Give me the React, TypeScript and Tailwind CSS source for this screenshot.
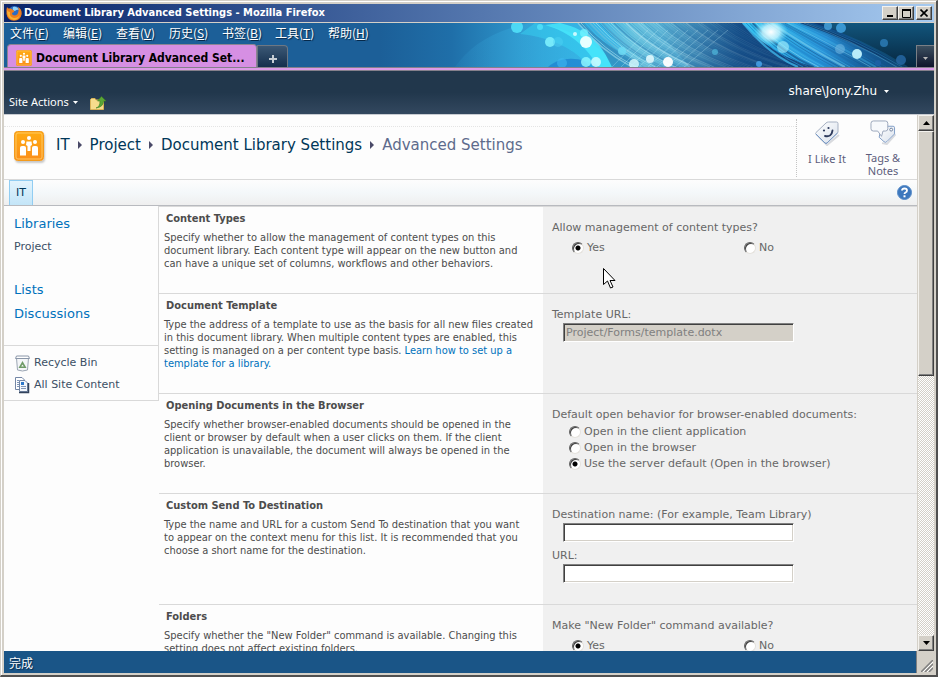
import type { ReactNode } from "react";

const MENUS = [
  ["文件", "F"],
  ["编辑", "E"],
  ["查看", "V"],
  ["历史", "S"],
  ["书签", "B"],
  ["工具", "T"],
  ["帮助", "H"],
];

const VERDANA = "font-['DejaVu_Sans',Verdana,sans-serif]";
const TAHOMA = "font-['DejaVu_Sans_Condensed',Tahoma,sans-serif]";
const CJK = "font-['Noto_Sans_CJK_SC',sans-serif]";
const RAISED =
  "border border-t-[#f4f2ee] border-l-[#f4f2ee] border-r-[#404040] border-b-[#404040] bg-[#d4d0c8] shadow-[inset_-1px_-1px_0_#808080]";

function range(n: number) {
  return Array.from({ length: n }, (_, i) => i);
}

function Banner() {
  const blues = ["#8fd0e6", "#3a86b8", "#6fbcd9", "#b4e2f0", "#4a98c4"];
  const deep = ["#3fb4e8", "#14558f", "#1f86cc", "#7fd4f0", "#1a68a8"];
  return (
    <svg className="absolute top-0 right-0" width="554" height="44" viewBox="380 23 554 44" aria-hidden="true">
      <defs>
        <linearGradient id="sky" x1="380" x2="934" y1="0" y2="0" gradientUnits="userSpaceOnUse">
          <stop offset="0" stopColor="#1c5f98" />
          <stop offset="0.13" stopColor="#1f6fa9" />
          <stop offset="0.26" stopColor="#2e97cc" />
          <stop offset="0.38" stopColor="#35b4e4" />
          <stop offset="0.46" stopColor="#66c4e0" />
          <stop offset="0.58" stopColor="#4a9cc8" />
          <stop offset="0.66" stopColor="#1a5f9c" />
          <stop offset="0.74" stopColor="#0c3a74" />
          <stop offset="0.9" stopColor="#0d3f70" />
          <stop offset="1" stopColor="#0f4d72" />
        </linearGradient>
        <linearGradient id="haze" x1="455" x2="600" y1="0" y2="0" gradientUnits="userSpaceOnUse">
          <stop offset="0" stopColor="#37a8dc" stopOpacity="0.1" />
          <stop offset="1" stopColor="#37b8e8" stopOpacity="0.7" />
        </linearGradient>
        <linearGradient id="beam" x1="740" x2="910" y1="23" y2="67" gradientUnits="userSpaceOnUse">
          <stop offset="0" stopColor="#35c8f2" />
          <stop offset="0.5" stopColor="#2b93d8" />
          <stop offset="1" stopColor="#12528f" stopOpacity="0.3" />
        </linearGradient>
        <linearGradient id="night" x1="0" x2="0" y1="23" y2="67" gradientUnits="userSpaceOnUse">
          <stop offset="0" stopColor="#12557c" />
          <stop offset="1" stopColor="#06263f" />
        </linearGradient>
        <linearGradient id="shade" x1="660" x2="740" y1="0" y2="0" gradientUnits="userSpaceOnUse">
          <stop offset="0" stopColor="#0c3a74" stopOpacity="0" />
          <stop offset="1" stopColor="#0c3a74" stopOpacity="0.6" />
        </linearGradient>
        <radialGradient id="glow">
          <stop offset="0" stopColor="#ffffff" />
          <stop offset="0.5" stopColor="#c9f7ff" stopOpacity="0.85" />
          <stop offset="1" stopColor="#6fe4fb" stopOpacity="0" />
        </radialGradient>
      </defs>
      <rect x="380" y="23" width="554" height="44" fill="url(#sky)" />
      <path d="M455 67 C470 45 495 30 530 23 H600 L640 67Z" fill="url(#haze)" />
      <path d="M548 67 C560 56 580 56 600 67Z" fill="#1d7fd0" opacity="0.7" />
      <path d="M535 23 C575 30 600 44 615 67 H590 C575 50 555 38 520 34Z" fill="#38dcf8" opacity="0.4" />
      <path d="M560 23 C590 30 603 46 612 67 H598 C588 48 570 32 545 25Z" fill="#4cf0ff" opacity="0.7" />
      <path d="M583 23 Q608 50 642 62 L632 67 H612 Q600 40 578 23Z" fill="#2f86b8" opacity="0.7" />
      {range(56).map((i) => (
        <path
          key={i}
          d={`M${578 + i * 3} 23 Q${600 + i * 3.3} 50 ${632 + i * 3.9} 67`}
          fill="none"
          stroke={blues[(i * 3) % 5]}
          strokeWidth={i % 4 === 0 ? 1.4 : 0.8}
          opacity={0.75 - i * 0.008}
        />
      ))}
      <path d="M650 23 H745 Q775 58 815 67 H690Z" fill="url(#shade)" />
      {range(9).map((i) => (
        <path key={i} d={`M${612 + i * 9} 67 L${648 + i * 10} 30`} stroke="#c8f4fc" strokeWidth="0.7" opacity="0.4" />
      ))}
      <path d="M880 23 H934 V67 H905 Q870 45 820 23Z" fill="url(#night)" />
      <path d="M742 23 Q775 58 815 67 H900 Q850 40 800 23Z" fill="url(#beam)" />
      {range(22).map((i) => (
        <path
          key={i}
          d={`M${743 + i * 3.2} 23 Q${768 + i * 4.3} ${54 - i * 0.8} ${798 + i * 5.2} 67`}
          fill="none"
          stroke={deep[(i * 2) % 5]}
          strokeWidth={i % 3 === 0 ? 2 : 1}
          opacity={0.8 - i * 0.025}
        />
      ))}
      <ellipse cx="771" cy="32" rx="17" ry="14" fill="url(#glow)" />
      <circle cx="783" cy="47" r="6" fill="#a8effc" opacity="0.6" />
      {[
        [517, 27, 6, "#52e4fb", 0.85],
        [540, 27, 3, "#52e4fb", 0.8],
        [550, 42, 5, "#7df0fd", 0.9],
        [558, 42, 5, "#4fd3f5", 0.45],
        [562, 63, 5, "#3fb8f0", 0.6],
        [575, 34, 2, "#d8fcff", 0.9],
        [584, 33, 4, "#6ff2ff", 0.8],
        [586, 42, 6, "#e6ffff", 1],
        [586, 62, 5, "#8df6ff", 0.85],
        [596, 62, 5, "#c8fcff", 0.9],
        [622, 51, 4, "#6fdcf5", 0.85],
        [634, 64, 5, "#d5f8fd", 0.85],
        [650, 59, 4, "#e8fcff", 0.85],
        [668, 62, 5, "#ffffff", 0.95],
        [715, 52, 3, "#4fb8dc", 0.7],
        [759, 64, 3, "#4aa8f0", 0.8],
        [828, 26, 4, "#4ba8e0", 0.8],
        [841, 28, 5, "#3f9edc", 0.9],
        [840, 49, 5, "#6fb4e0", 0.6],
        [857, 54, 5, "#b8ecfa", 1],
        [884, 43, 4, "#2a78b0", 0.9],
        [878, 63, 3, "#1f62a8", 0.8],
        [901, 60, 5, "#24649f", 0.9],
      ].map(([x, y, r, c, o], i) => (
        <circle key={i} cx={x} cy={y} r={r} fill={String(c)} opacity={o} />
      ))}
    </svg>
  );
}

function FirefoxIcon() {
  return (
    <svg width="16" height="16" viewBox="0 0 16 16" aria-hidden="true">
      <circle cx="8.5" cy="7.5" r="6.5" fill="#2b6cc4" />
      <path d="M7 2 Q11 1 13 5 Q11 4 9 6 Q6 6 7 2Z" fill="#8fd0f5" />
      <path d="M1 2 Q2 4 4 3.500 Q6 3.500 7 5 Q9 5.500 8 7 L6 8 Q6 10.500 9 10.500 Q12 10 12.500 6 Q13 4 12 2 Q16 4 15.700 9 Q14.500 15.500 8 15.700 Q1.500 15.500 0.500 9 Q0 5 1 2Z" fill="#ee7d1c" />
      <path d="M1 5 Q2 7 4 7 Q3 12 8 13 Q12 13 14 10 Q12 15 8 15 Q1 14 1 5Z" fill="#f9b233" />
    </svg>
  );
}

function PeopleIcon({ size }: { size: number }) {
  return (
    <svg width={size} height={size} viewBox="0 0 30 30" aria-hidden="true">
      <defs>
        <linearGradient id="amber" x1="0" x2="0" y1="0" y2="1">
          <stop offset="0" stopColor="#ffab12" />
          <stop offset="1" stopColor="#fb8f1c" />
        </linearGradient>
      </defs>
      <rect x="0.500" y="0.500" width="29" height="29" rx="3" fill="url(#amber)" stroke="#f39a1c" />
      <rect x="2" y="2" width="26" height="26" rx="2" fill="none" stroke="#ffc860" />
      <g fill="#fff">
        <circle cx="15" cy="7" r="2" />
        <circle cx="9" cy="11" r="2" />
        <circle cx="21" cy="11" r="2" />
        <path d="M12.500 10.500 H17.500 L18 14 L16.500 15 V20 H13.500 V15 L12 14Z" />
        <path d="M6 24.500 V16.500 Q6 15 8 15 H10 Q12 15 12 16.500 V24.500Z" />
        <path d="M18 24.500 V16.500 Q18 15 20 15 H22 Q24 15 24 16.500 V24.500Z" />
      </g>
    </svg>
  );
}

function LikeIcon() {
  return (
    <svg width="26" height="26" viewBox="0 0 26 26" aria-hidden="true">
      <defs>
        <linearGradient id="tag" x1="0" x2="1" y1="0" y2="1">
          <stop offset="0" stopColor="#ffffff" />
          <stop offset="1" stopColor="#d9e1ec" />
        </linearGradient>
      </defs>
      <path d="M5 17 L13 25 L25 15" fill="none" stroke="#d8dade" strokeWidth="2" />
      <path d="M2 12.500 L12 3 Q13 2 14.500 2 L22.500 2 Q24 2 24 3.500 L24 12.500 L13 23 Q12 24 11 23 L2 14.500 Q1 13.500 2 12.500Z" fill="url(#tag)" stroke="#a5b0c2" />
      <path d="M2 14 L11 23 Q12 24 13 23 L23.500 13" fill="none" stroke="#7598c8" />
      <circle cx="10" cy="10.500" r="1.100" fill="#2d3a5c" />
      <circle cx="14.500" cy="8" r="1.100" fill="#2d3a5c" />
      <path d="M11 16 Q17.500 17.500 18.500 10.500" fill="none" stroke="#2d3a5c" strokeWidth="1.800" strokeLinecap="round" />
    </svg>
  );
}

function TagsIcon() {
  return (
    <svg width="26" height="26" viewBox="0 0 26 26" aria-hidden="true">
      <path d="M12 24 L17 25 L26 15" fill="none" stroke="#d8dade" strokeWidth="2" />
      <path d="M10 13 L16 6.500 H23.500 Q25 6.500 25 8 V14.500 L17 22.500 Q15.500 24 14 22.500 L9 18Z" fill="url(#tag)" stroke="#7f9cc6" />
      <circle cx="21.500" cy="10" r="1.500" fill="#fff" stroke="#6d7f9e" />
      <path d="M3 1 H15.500 Q18 1 18 3.500 V9 Q18 11.500 15.500 11.500 H13 L11.500 17 L7.500 11.500 H3 Q0.500 11.500 0.500 9 V3.500 Q0.500 1 3 1Z" fill="#f7f9fc" stroke="#9aa6ba" />
    </svg>
  );
}

function FolderUpIcon() {
  return (
    <svg width="16" height="14" viewBox="0 0 16 14" aria-hidden="true">
      <path d="M0.500 3.500 L1.500 2.500 H5 L6 4 H13.500 V13.500 H0.500Z" fill="#f7dc8c" stroke="#d9b356" />
      <path d="M6 12 Q10 11 10 5 H7.500 L11.500 0.500 L16 5 H13.500 Q13.500 11 6 12Z" fill="#5aa536" stroke="#3d8222" strokeWidth="0.600" />
    </svg>
  );
}

function BinIcon() {
  return (
    <svg width="15" height="17" viewBox="0 0 15 17" aria-hidden="true">
      <path d="M1.500 3 L2.500 15 Q7.500 17 12.500 15 L13.500 3Z" fill="#f4f6f8" stroke="#9ca6b4" />
      <path d="M1.500 1 H13.500 L14.500 3.500 H0.500Z" fill="#fff" stroke="#8a96a8" />
      <path d="M7.500 6 L11.500 13 H3.500Z" fill="#6e9a66" />
      <path d="M7.500 9.500 L8.800 11.500 H6.200Z" fill="#f4f6f8" />
    </svg>
  );
}

function PagesIcon() {
  return (
    <svg width="15" height="17" viewBox="0 0 15 17" aria-hidden="true">
      <path d="M0.500 0.500 H7 L9.500 3 V12.500 H0.500Z" fill="#fff" stroke="#7487a6" />
      <path d="M4.500 3.500 H10 L12.500 6 V14.500 H4.500Z" fill="#f3f7fc" stroke="#7487a6" />
      <path d="M2 3.500 H4 M2 5.500 H4 M2 7.500 H4 M2 9.500 H4 M6 9.500 H11 M6 11.500 H11" stroke="#8096b8" />
      <rect x="6" y="5" width="3" height="3" fill="#2c77c9" />
      <path d="M13.500 6 V15.500 H4" fill="none" stroke="#33435c" strokeWidth="1.500" />
    </svg>
  );
}

function Caret({ className }: { className: string }) {
  return (
    <svg width="5" height="3" viewBox="0 0 5 3" className={className} aria-hidden="true">
      <path d="M0 0 H5 L2.500 3Z" fill="currentColor" />
    </svg>
  );
}

function Radio({ name, label, checked = false }: { name: string; label: string; checked?: boolean }) {
  return (
    <label className="flex h-4 items-center gap-[3px]">
      <input
        type="radio"
        name={name}
        defaultChecked={checked}
        className="size-3 shrink-0 appearance-none rounded-full border border-t-[#606060] border-l-[#606060] border-r-[#e4e1dc] border-b-[#e4e1dc] bg-white shadow-[inset_1px_1px_0_#404040] checked:bg-[radial-gradient(circle,#000_2px,#fff_3px)]"
      />
      {label}
    </label>
  );
}

function Field({ id, label, value, disabled = false }: { id: string; label: string; value?: string; disabled?: boolean }) {
  return (
    <div>
      <label htmlFor={id} className="block">
        {label}
      </label>
      <input
        id={id}
        type="text"
        defaultValue={value}
        disabled={disabled}
        className="mt-px ml-[11px] block h-[19px] w-[231px] border border-t-[#808080] border-l-[#808080] border-r-white border-b-white bg-white px-0.5 text-[11px] shadow-[inset_1px_1px_0_#404040,inset_-1px_-1px_0_#d4d0c8] disabled:bg-[#d4d0c8] disabled:text-[#808080]"
      />
    </div>
  );
}

function Section({ title, lines, children }: { title: string; lines: ReactNode[]; children: ReactNode }) {
  return (
    <section className="flex shrink-0">
      <div className={`w-[384px] shrink-0 border-t border-[#d9d9d9] pt-[5px] pb-[23px] pl-[5px] text-[11px] text-[#4c4c4c] ${TAHOMA}`}>
        <h2 className="pl-0.5 leading-[14px] font-bold">{title}</h2>
        <p className="mt-[5px] leading-[13px]">
          {lines.map((line, i) => (
            <span key={i} className="block whitespace-nowrap">
              {line}
            </span>
          ))}
        </p>
      </div>
      <div className="relative flex-1 border-t border-[#d9d9d9] bg-[#f0f0f0] pt-3.5 pb-[21px] pl-[9px] text-[11px] leading-[14px] text-[#676767]">
        {children}
      </div>
    </section>
  );
}

function YesNo({ name }: { name: string }) {
  return (
    <div className="mt-[5px] grid grid-cols-[172px_1fr] pl-5">
      <Radio name={name} label="Yes" checked />
      <Radio name={name} label="No" />
    </div>
  );
}

function Crumb({ children }: { children: string }) {
  return (
    <>
      <a href="#" className="text-[#003759]">
        {children}
      </a>
      <svg width="4" height="8" viewBox="0 0 4 8" aria-hidden="true">
        <path d="M0 0 L4 4 L0 8Z" fill="#4a4a68" />
      </svg>
    </>
  );
}

export default function App() {
  return (
    <div className={`flex h-screen w-full flex-col overflow-hidden border-t border-l border-r-2 border-b-2 border-t-[#d4d0c8] border-l-[#d4d0c8] border-r-[#505050] border-b-[#505050] bg-[#d4d0c8] ${VERDANA}`}>
      <div className="flex min-h-0 flex-1 flex-col border-t border-l border-white pt-0.5 pr-0.5 pb-0.5 pl-0.5">
        <header className="flex h-[18px] shrink-0 items-center bg-linear-to-r from-[#0a246a] to-[#a6caf0] pr-0.5 pl-0.5">
          <FirefoxIcon />
          <h1 className={`ml-0.5 flex-1 text-[11px] font-bold text-white ${TAHOMA}`}>
            Document Library Advanced Settings - Mozilla Firefox
          </h1>
          <button type="button" aria-label="Minimize" className={`flex h-3.5 w-4 items-center justify-center ${RAISED}`}>
            <svg width="8" height="8"><path d="M1 7 H7" stroke="#000" strokeWidth="2" /></svg>
          </button>
          <button type="button" aria-label="Maximize" className={`flex h-3.5 w-4 items-center justify-center ${RAISED}`}>
            <svg width="9" height="9"><path d="M0.500 0 V8.500 H8.500 V0" fill="none" stroke="#000" /><path d="M0 1 H9" stroke="#000" strokeWidth="2" /></svg>
          </button>
          <button type="button" aria-label="Close" className={`ml-0.5 flex h-3.5 w-4 items-center justify-center ${RAISED}`}>
            <svg width="8" height="8"><path d="M0.500 0.500 L7.500 7.500 M7.500 0.500 L0.500 7.500" stroke="#000" strokeWidth="1.600" /></svg>
          </button>
        </header>

        <div className="relative flex h-[45px] shrink-0 flex-col border-t border-[#d4d0c8] bg-[#1c5f98]">
          <Banner />
          <nav className={`relative flex h-5 items-center gap-[11px] pl-[6px] text-[12px] leading-[18px] text-white ${CJK}`}>
            {MENUS.map(([name, key]) => (
              <button key={key} type="button" className="w-[42px] text-left whitespace-nowrap [text-shadow:1px_1px_1px_#06294a]">
                {name}(<span className="underline">{key}</span>)
              </button>
            ))}
          </nav>
          <div className="relative flex flex-1 items-end pl-[3px]">
            <button type="button" className={`flex h-[23px] w-[250px] items-center gap-1 rounded-t-sm border border-b-0 border-[#8c8494] bg-[#d68fe3] pt-1 pl-2 text-[12px] font-bold text-black ${TAHOMA}`}>
              <PeopleIcon size={16} />
              Document Library Advanced Set...
            </button>
            <button type="button" aria-label="New tab" className="flex h-[22px] w-[31px] items-center justify-center rounded-tr-sm border border-b-0 border-[#6d7783] bg-linear-to-b from-[#3b5875] to-[#152f4d] pt-1">
              <svg width="8" height="8"><path d="M4 0 V8 M0 4 H8" stroke="#c6cdd4" strokeWidth="2" /></svg>
            </button>
            <button type="button" aria-label="List all tabs" className="ml-auto flex h-[22px] w-[18px] items-center justify-center border border-r-0 border-b-0 border-[#7a7f86] bg-linear-to-b from-[#3d5060] to-[#10152c] pt-1 text-[#b8b8b8]">
              <Caret className="" />
            </button>
          </div>
        </div>
        <div className="h-1 shrink-0 border-t border-b border-t-[#85808c] border-b-[#85808c] bg-[#dc9be8]" />

        <div className="flex h-[43px] shrink-0 justify-between bg-linear-to-b from-[#21374c] from-50% to-[#33485f] pr-[45px] pl-[5px] text-white">
          <div className="flex items-end gap-3 pb-1">
            <button type="button" className="flex items-center gap-1 font-['Noto_Sans',sans-serif] text-[11px] leading-4">
              Site Actions
              <Caret className="" />
            </button>
            <a href="#" aria-label="Navigate up">
              <FolderUpIcon />
            </a>
          </div>
          <button type="button" className="flex items-center gap-[7px] pb-[3px] text-[12px]">
            share\Jony.Zhu
            <Caret className="" />
          </button>
        </div>

        <div className="flex min-h-0 flex-1 border-t border-[#c8ccd2]">
          <div className="flex min-w-0 flex-1 flex-col overflow-hidden bg-[#fdfdfd]">
            <div className="flex h-[65px] shrink-0 border-b border-[#d9d9d9]">
              <div className="flex-1 pt-[11px]">
                <div className="flex items-center gap-3 border-t border-dotted border-[#e4e4e4] pt-1 pl-2.5">
                  <span className="rounded shadow-[1px_2px_2px_#c8c8c8]">
                    <PeopleIcon size={30} />
                  </span>
                  <nav className="flex items-center gap-2 pb-0.5 text-[15px] whitespace-nowrap">
                    <Crumb>IT</Crumb>
                    <Crumb>Project</Crumb>
                    <Crumb>Document Library Settings</Crumb>
                    <span className="text-[#5d6b8c]">Advanced Settings</span>
                  </nav>
                </div>
              </div>
              <div className="mt-1 mb-0.5 flex border-l border-dotted border-[#c4c4c4] px-0.5 pt-px text-center font-['Noto_Sans',sans-serif] text-[11px] leading-[13px] text-[#5d5d7c]">
                <button type="button" className="flex w-14 flex-col items-center gap-1.5">
                  <LikeIcon />
                  I Like It
                </button>
                <button type="button" className="flex w-14 flex-col items-center gap-1.5">
                  <TagsIcon />
                  <span className="w-10">Tags &amp; Notes</span>
                </button>
                <span className="w-1" />
              </div>
            </div>

            <div className="flex h-[26px] shrink-0 items-center justify-between border-b border-[#b8babf] bg-linear-to-b from-[#fdfdfd] via-[#f4f8fa] to-[#efefef] pr-[5px] pl-[5px]">
              <a href="#" className="flex h-full w-6 items-center justify-center border-x border-t border-[#91cdf2] bg-linear-to-b from-[#e3f4fd] to-[#c3e5f8] text-[11px] text-[#003759]">
                IT
              </a>
              <button type="button" aria-label="Help">
                <svg width="15" height="15" viewBox="0 0 15 15">
                  <circle cx="7.500" cy="7.500" r="7" fill="#3c77bd" stroke="#5a8cc8" />
                  <path d="M5 5.500 Q5 3.500 7.500 3.500 Q10 3.500 10 5.500 Q10 6.800 8.500 7.500 Q7.500 8 7.500 9" fill="none" stroke="#fff" strokeWidth="1.800" />
                  <rect x="6.500" y="10.300" width="2" height="2" fill="#fff" />
                </svg>
              </button>
            </div>

            <div className="flex min-h-0 flex-1">
              <aside className="w-[155px] shrink-0 self-start border-r border-b border-[#d9d9d9] text-[11px] text-[#3b4f65]">
                <nav className="h-[139px] pt-[9px] pl-2.5 text-[13px] leading-[18px] text-[#0072bc]">
                  <a href="#" className="block">Libraries</a>
                  <a href="#" className="mt-[5px] block text-[11px] text-[#3b4f65]">Project</a>
                  <a href="#" className="mt-[25px] block">Lists</a>
                  <a href="#" className="mt-1.5 block">Discussions</a>
                </nav>
                <nav className="border-t border-[#d9d9d9] pt-1.5 pb-1 pl-[11px] leading-[22px]">
                  <a href="#" className="flex items-center gap-1"><BinIcon />Recycle Bin</a>
                  <a href="#" className="flex items-center gap-1"><PagesIcon />All Site Content</a>
                </nav>
              </aside>

              <form className="flex min-w-0 flex-1 flex-col">
                <Section
                  title="Content Types"
                  lines={[
                    "Specify whether to allow the management of content types on this",
                    "document library. Each content type will appear on the new button and",
                    "can have a unique set of columns, workflows and other behaviors.",
                  ]}
                >
                  Allow management of content types?
                  <YesNo name="content-types" />
                  <svg className="absolute top-[61px] left-[60px]" width="13" height="21" viewBox="0 0 13 21" aria-hidden="true">
                    <path d="M0.500 0.500 V16.500 L4.500 13 L7.500 20 L10 19 L7 12.500 H12Z" fill="#fff" stroke="#000" />
                  </svg>
                </Section>
                <Section
                  title="Document Template"
                  lines={[
                    "Type the address of a template to use as the basis for all new files created",
                    "in this document library. When multiple content types are enabled, this",
                    <>
                      setting is managed on a per content type basis.{" "}
                      <a href="#" className="text-[#0072bc]">Learn how to set up a</a>
                    </>,
                    <a href="#" className="text-[#0072bc]">template for a library.</a>,
                  ]}
                >
                  <Field id="template-url" label="Template URL:" value="Project/Forms/template.dotx" disabled />
                </Section>
                <Section
                  title="Opening Documents in the Browser"
                  lines={[
                    "Specify whether browser-enabled documents should be opened in the",
                    "client or browser by default when a user clicks on them. If the client",
                    "application is unavailable, the document will always be opened in the",
                    "browser.",
                  ]}
                >
                  Default open behavior for browser-enabled documents:
                  <div className="mt-0.5 pl-[17px]">
                    <Radio name="open" label="Open in the client application" />
                    <Radio name="open" label="Open in the browser" />
                    <Radio name="open" label="Use the server default (Open in the browser)" checked />
                  </div>
                </Section>
                <Section
                  title="Custom Send To Destination"
                  lines={[
                    "Type the name and URL for a custom Send To destination that you want",
                    "to appear on the context menu for this list. It is recommended that you",
                    "choose a short name for the destination.",
                  ]}
                >
                  <div className="flex flex-col gap-[7px]">
                    <Field id="dest-name" label="Destination name: (For example, Team Library)" />
                    <Field id="dest-url" label="URL:" />
                  </div>
                </Section>
                <Section
                  title="Folders"
                  lines={[
                    'Specify whether the "New Folder" command is available. Changing this',
                    "setting does not affect existing folders.",
                  ]}
                >
                  Make "New Folder" command available?
                  <YesNo name="folders" />
                </Section>
              </form>
            </div>
          </div>

          <div className="ml-px flex w-4 shrink-0 flex-col bg-[repeating-conic-gradient(#fff_0_25%,#d4d0c8_0_50%)] bg-[length:2px_2px]">
            <button type="button" aria-label="Scroll up" className={`flex h-4 shrink-0 items-center justify-center text-black ${RAISED}`}>
              <svg width="7" height="4"><path d="M0 4 H7 L3.500 0Z" /></svg>
            </button>
            <div className={`h-[245px] ${RAISED}`} />
            <button type="button" aria-label="Scroll down" className={`mt-auto flex h-4 shrink-0 items-center justify-center text-black ${RAISED}`}>
              <svg width="7" height="4"><path d="M0 0 H7 L3.500 4Z" /></svg>
            </button>
          </div>
        </div>

        <footer className="flex h-[22px] shrink-0">
          <div className={`flex flex-1 items-center bg-[#1a5587] pt-0.5 pl-[5px] text-[12px] text-white [text-shadow:1px_1px_1px_#06294a] ${CJK}`}>
            完成
          </div>
          <div className="flex w-[18px] items-end justify-end border-l border-[#808080] pr-px pb-px">
            <svg width="12" height="12" aria-hidden="true">
              <path d="M0 12 L12 0 M4 12 L12 4 M8 12 L12 8" stroke="#808080" strokeWidth="1.500" />
              <path d="M2 12 L12 2 M6 12 L12 6" stroke="#fff" />
            </svg>
          </div>
        </footer>
      </div>
    </div>
  );
}
